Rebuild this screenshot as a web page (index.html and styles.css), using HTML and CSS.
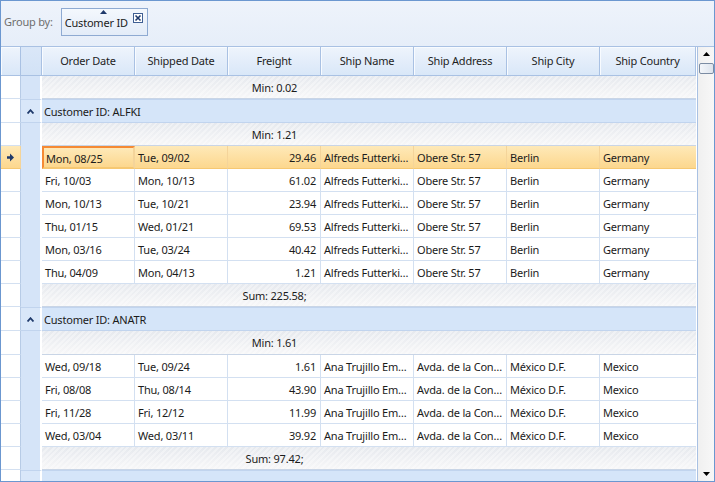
FILE: index.html
```html
<!DOCTYPE html>
<html>
<head>
<meta charset="utf-8">
<link rel="stylesheet" href="styles.css">
</head>
<body>
<div class="grid">
  <div class="groupbar">
    <span class="gb-label">Group by:</span>
    <div class="gb-chip">
      <svg class="sort-tri" width="7" height="4" viewBox="0 0 7 4"><path d="M0 4 L3.5 0 L7 4 Z" fill="#1f3a6b"/></svg>
      <span>Customer ID</span>
      <svg class="close" width="10" height="10" viewBox="0 0 10 10"><rect x="0.5" y="0.5" width="9" height="9" fill="#fff" stroke="#3f5f93"/><path d="M2.5 2.5 L7.5 7.5 M7.5 2.5 L2.5 7.5" stroke="#1f3a6b" stroke-width="1.6"/></svg>
    </div>
  </div>
  <div class="main">
    <div class="rows">
      <div class="row header">
        <div class="c ind"></div><div class="c indent"></div>
        <div class="c hc">Order Date</div><div class="c hc">Shipped Date</div><div class="c hc">Freight</div><div class="c hc">Ship Name</div><div class="c hc">Ship Address</div><div class="c hc">Ship City</div><div class="c hc">Ship Country</div>
      </div>

      <div class="row summary"><div class="c ind"></div><div class="c indent nogroup"></div><div class="sumarea"><span></span><span class="sumtxt">Min: 0.02</span></div></div>

      <div class="row grouprow"><div class="c ind"></div><div class="c indent gchev"><svg width="7" height="5" viewBox="0 0 7 5"><path d="M0.5 4.5 L3.5 1.2 L6.5 4.5" fill="none" stroke="#1f3a6b" stroke-width="1.8"/></svg></div><div class="gtitle">Customer ID: ALFKI</div></div>
      <div class="row summary"><div class="c ind"></div><div class="c indent"></div><div class="sumarea"><span></span><span class="sumtxt">Min: 1.21</span></div></div>

      <div class="row data selected"><div class="c ind"><svg width="7" height="9" viewBox="0 0 7 9"><path d="M0 3.2 H3 V0.5 L7 4.5 L3 8.5 V5.8 H0 Z" fill="#1f3a6b"/></svg></div><div class="c indent"></div><div class="c focus">Mon, 08/25</div><div class="c">Tue, 09/02</div><div class="c num">29.46</div><div class="c">Alfreds Futterkiste</div><div class="c">Obere Str. 57</div><div class="c">Berlin</div><div class="c">Germany</div></div>
      <div class="row data"><div class="c ind"></div><div class="c indent"></div><div class="c">Fri, 10/03</div><div class="c">Mon, 10/13</div><div class="c num">61.02</div><div class="c">Alfreds Futterkiste</div><div class="c">Obere Str. 57</div><div class="c">Berlin</div><div class="c">Germany</div></div>
      <div class="row data"><div class="c ind"></div><div class="c indent"></div><div class="c">Mon, 10/13</div><div class="c">Tue, 10/21</div><div class="c num">23.94</div><div class="c">Alfreds Futterkiste</div><div class="c">Obere Str. 57</div><div class="c">Berlin</div><div class="c">Germany</div></div>
      <div class="row data"><div class="c ind"></div><div class="c indent"></div><div class="c">Thu, 01/15</div><div class="c">Wed, 01/21</div><div class="c num">69.53</div><div class="c">Alfreds Futterkiste</div><div class="c">Obere Str. 57</div><div class="c">Berlin</div><div class="c">Germany</div></div>
      <div class="row data"><div class="c ind"></div><div class="c indent"></div><div class="c">Mon, 03/16</div><div class="c">Tue, 03/24</div><div class="c num">40.42</div><div class="c">Alfreds Futterkiste</div><div class="c">Obere Str. 57</div><div class="c">Berlin</div><div class="c">Germany</div></div>
      <div class="row data"><div class="c ind"></div><div class="c indent"></div><div class="c">Thu, 04/09</div><div class="c">Mon, 04/13</div><div class="c num">1.21</div><div class="c">Alfreds Futterkiste</div><div class="c">Obere Str. 57</div><div class="c">Berlin</div><div class="c">Germany</div></div>
      <div class="row summary"><div class="c ind"></div><div class="c indent"></div><div class="sumarea"><span></span><span class="sumtxt">Sum: 225.58;</span></div></div>

      <div class="row grouprow"><div class="c ind"></div><div class="c indent gchev"><svg width="7" height="5" viewBox="0 0 7 5"><path d="M0.5 4.5 L3.5 1.2 L6.5 4.5" fill="none" stroke="#1f3a6b" stroke-width="1.8"/></svg></div><div class="gtitle">Customer ID: ANATR</div></div>
      <div class="row summary tall"><div class="c ind"></div><div class="c indent"></div><div class="sumarea"><span></span><span class="sumtxt">Min: 1.61</span></div></div>

      <div class="row data"><div class="c ind"></div><div class="c indent"></div><div class="c">Wed, 09/18</div><div class="c">Tue, 09/24</div><div class="c num">1.61</div><div class="c">Ana Trujillo Emparedados y helados</div><div class="c">Avda. de la Constitución 2222</div><div class="c">México D.F.</div><div class="c">Mexico</div></div>
      <div class="row data"><div class="c ind"></div><div class="c indent"></div><div class="c">Fri, 08/08</div><div class="c">Thu, 08/14</div><div class="c num">43.90</div><div class="c">Ana Trujillo Emparedados y helados</div><div class="c">Avda. de la Constitución 2222</div><div class="c">México D.F.</div><div class="c">Mexico</div></div>
      <div class="row data"><div class="c ind"></div><div class="c indent"></div><div class="c">Fri, 11/28</div><div class="c">Fri, 12/12</div><div class="c num">11.99</div><div class="c">Ana Trujillo Emparedados y helados</div><div class="c">Avda. de la Constitución 2222</div><div class="c">México D.F.</div><div class="c">Mexico</div></div>
      <div class="row data"><div class="c ind"></div><div class="c indent"></div><div class="c">Wed, 03/04</div><div class="c">Wed, 03/11</div><div class="c num">39.92</div><div class="c">Ana Trujillo Emparedados y helados</div><div class="c">Avda. de la Constitución 2222</div><div class="c">México D.F.</div><div class="c">Mexico</div></div>
      <div class="row summary"><div class="c ind"></div><div class="c indent"></div><div class="sumarea"><span></span><span class="sumtxt">Sum: 97.42;</span></div></div>

      <div class="row grouprow"><div class="c ind"></div><div class="c indent gchev"></div><div class="gtitle"></div></div>
    </div>
    <div class="vscroll">
      <svg class="sarrow" width="7" height="4" viewBox="0 0 7 4"><path d="M0 4 L3.5 0 L7 4 Z" fill="#000"/></svg>
      <div class="thumb"></div>
      <div class="track"></div>
      <svg class="sarrow" width="7" height="4" viewBox="0 0 7 4"><path d="M0 0 L3.5 4 L7 0 Z" fill="#000"/></svg>
    </div>
  </div>
</div>
</body>
</html>
```

FILE: styles.css
```css
html, body {
  margin: 0;
  padding: 0;
  background: #fff;
}
body {
  font-family: "Noto Sans", "Open Sans", sans-serif;
  font-size: 11px;
  letter-spacing: -0.2px;
  color: #1b1b1b;
}
.grid {
  width: 715px;
  height: 482px;
  box-sizing: border-box;
  border: 1px solid #6b97d0;
  display: flex;
  flex-direction: column;
  overflow: hidden;
}
.groupbar {
  height: 46px;
  flex: none;
  box-sizing: border-box;
  border-bottom: 1px solid #a9c1e3;
  background: linear-gradient(#eef3fb, #e6eef9);
  display: flex;
  align-items: flex-start;
  padding: 7px 0 0 3px;
  gap: 8px;
}
.gb-label {
  color: #6e6e6e;
  margin-top: 6px;
}
.gb-chip {
  position: relative;
  height: 28px;
  box-sizing: border-box;
  border: 1px solid #8eaad2;
  background: linear-gradient(#f4f8fd, #e3ecf8);
  display: flex;
  align-items: center;
  padding: 0 4px 0 3px;
  gap: 5px;
  color: #1b1b1b;
}
.gb-chip span { margin-top: 1px; }
.sort-tri {
  position: absolute;
  left: calc(50% - 4px);
  top: 1px;
}
.close { margin-top: -8px; }
.main {
  flex: 1;
  display: flex;
  min-height: 0;
}
.rows {
  width: 696px;
  flex: none;
  overflow: hidden;
  border-right: 1px solid #a9c1e3;
}
.row {
  display: grid;
  grid-template-columns: 20px 21px 93px 93px 93px 93px 93px 93px 96px;
  height: 23px;
  box-sizing: border-box;
}
.c {
  box-sizing: border-box;
  border-right: 1px solid #d3e0f1;
  border-bottom: 1px solid #d3e0f1;
  padding: 0 3px;
  display: flex;
  align-items: center;
  white-space: nowrap;
  overflow: hidden;
  min-width: 0;
}
.c:last-child { border-right: none; }
.ind {
  background: #fff;
  border-right: 1px solid #b7cbe6;
  border-bottom: 1px solid #d3e0f1;
  justify-content: center;
  padding: 0;
}
.indent {
  background: #d5e4f8;
  border-right: 2px solid #fff;
  border-bottom: none;
  justify-content: center;
  padding: 0;
}
.header {
  height: 29px;
}
.header .c {
  background: linear-gradient(#eef4fc, #d9e7f8);
  border-right: 1px solid #a9c1e3;
  border-bottom: 1px solid #a9c1e3;
  box-shadow: inset 1px 1px 0 #f8fbff;
  justify-content: center;
  color: #1e1e1e;
  padding-bottom: 1px;
}
.header .indent {
  background: linear-gradient(#dae7f8, #d2e2f6);
  box-shadow: none;
}
.data .c { color: #1b1b1b; }
.data .c:not(.ind):not(.indent) {
  display: block;
  line-height: 24px;
  text-overflow: ellipsis;
}
.data .num { text-align: right; padding-right: 4px; }
.selected .c:not(.indent) {
  background: linear-gradient(#fee9b8, #fcd78e);
  border-bottom-color: #f6c872;
  border-right-color: #f4d49a;
}
.selected .ind {
  background: linear-gradient(#fff4dc, #fde7b8);
}
.selected .focus {
  border: 2px solid #f58a34;
  line-height: 21px !important;
  padding-left: 2px;
}
.sumarea {
  grid-column: 3 / -1;
  display: grid;
  grid-template-columns: 186px 93px;
  align-items: center;
  box-sizing: border-box;
  border-bottom: 1px solid #c9d5e6;
  background:
    repeating-linear-gradient(-45deg, rgba(255,255,255,0.35) 0 2px, rgba(255,255,255,0) 2px 4px),
    linear-gradient(#e6e9ee, #f7f7f8);
}
.sumtxt {
  text-align: center;
  color: #1b1b1b;
}
.tall { height: 24px; }
.grouprow { height: 24px; }
.grouprow .gchev {
  background: #d9e7f9;
  border-top: 1px solid #c1d4ee;
  border-bottom: 1px solid #c1d4ee;
  border-right: 2px solid #fff;
}
.gtitle {
  grid-column: 3 / -1;
  background: #d5e5f9;
  border-top: 1px solid #c1d4ee;
  border-bottom: 1px solid #c1d4ee;
  display: flex;
  align-items: center;
  padding-left: 2px;
  color: #1b1b1b;
}
.vscroll {
  width: 17px;
  flex: none;
  background: linear-gradient(90deg, #f0f0f0, #f8f8f8);
  display: flex;
  flex-direction: column;
  align-items: center;
}
.sarrow { margin: 5px 0 0 0; flex: none; }
.vscroll .sarrow:last-child { margin: 0 0 5px 0; }
.thumb {
  margin-top: 7px;
  width: 15px;
  height: 11px;
  box-sizing: border-box;
  border: 1px solid #7b8ca3;
  border-radius: 2px;
  background: linear-gradient(90deg, #f3f6fa, #dde4ed);
  flex: none;
}
.track { flex: 1; }
```
